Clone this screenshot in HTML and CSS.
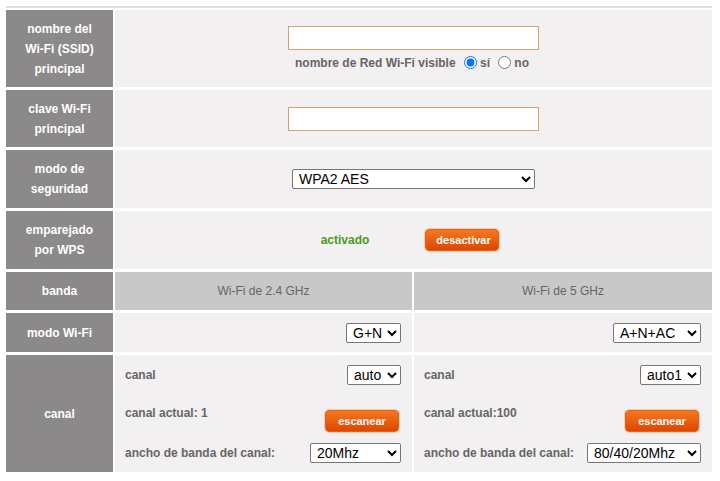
FILE: index.html
```html
<!DOCTYPE html>
<html lang="es">
<head>
    <meta charset="UTF-8">
    <meta name="viewport" content="width=device-width, initial-scale=1.0">
    <title>Configuración Wi-Fi</title>
    <link rel="stylesheet" href="styles.css">
</head>
<body>
    <div class="panel">
        <div class="settings">
            <div class="label">nombre del<br>Wi-Fi (SSID)<br>principal</div>
            <div class="field wide ssid">
                <input type="text" class="text-input">
                <div class="hint">nombre de Red Wi-Fi visible <input type="radio" name="visible" checked>sí <input type="radio" name="visible">no</div>
            </div>

            <div class="label">clave Wi-Fi<br>principal</div>
            <div class="field wide">
                <input type="password" class="text-input">
            </div>

            <div class="label">modo de<br>seguridad</div>
            <div class="field wide">
                <select class="security">
                    <option>WPA2 AES</option>
                </select>
            </div>

            <div class="label">emparejado<br>por WPS</div>
            <div class="field wide wps">
                <span class="status">activado</span>
                <button class="btn">desactivar</button>
            </div>

            <div class="label">banda</div>
            <div class="band">Wi-Fi de 2.4 GHz</div>
            <div class="band">Wi-Fi de 5 GHz</div>

            <div class="label">modo Wi-Fi</div>
            <div class="field right">
                <select class="sel-gn">
                    <option>G+N</option>
                </select>
            </div>
            <div class="field right">
                <select class="sel-ac">
                    <option>A+N+AC</option>
                </select>
            </div>

            <div class="label">canal</div>
            <div class="field channel">
                <div class="ch-row">
                    <span class="sub">canal</span>
                    <select class="sel-auto">
                        <option>auto</option>
                    </select>
                </div>
                <div class="ch-row scan-row">
                    <span class="sub">canal actual: 1</span>
                    <button class="btn scan">escanear</button>
                </div>
                <div class="ch-row">
                    <span class="sub">ancho de banda del canal:</span>
                    <select class="sel-bw">
                        <option>20Mhz</option>
                    </select>
                </div>
            </div>
            <div class="field channel">
                <div class="ch-row">
                    <span class="sub">canal</span>
                    <select class="sel-auto1">
                        <option>auto1</option>
                    </select>
                </div>
                <div class="ch-row scan-row">
                    <span class="sub">canal actual:100</span>
                    <button class="btn scan">escanear</button>
                </div>
                <div class="ch-row">
                    <span class="sub">ancho de banda del canal:</span>
                    <select class="sel-bw5">
                        <option>80/40/20Mhz</option>
                    </select>
                </div>
            </div>
        </div>
    </div>
</body>
</html>
```

FILE: styles.css
```css
body {
    margin: 0;
    padding: 0;
    background-color: #fff;
    font-family: "Liberation Sans", Arial, sans-serif;
}
.panel {
    margin: 6px 0 0 6px;
    width: 706px;
    border-top: 2px solid #e0dfdf;
    padding-top: 2px;
}
.settings {
    display: grid;
    grid-template-columns: 107px 297px 298px;
    grid-template-rows: 77px 57px 58px 58px 38px 39px 117px;
    column-gap: 2px;
    row-gap: 3px;
}
.label {
    background-color: #8b8989;
    color: #fff;
    font-weight: bold;
    font-size: 12px;
    line-height: 20px;
    text-align: center;
    display: flex;
    align-items: center;
    justify-content: center;
}
.field {
    background-color: #f2f0f0;
    display: flex;
    align-items: center;
}
.wide {
    grid-column: 2 / 4;
    justify-content: center;
}
.ssid {
    flex-direction: column;
    gap: 5px;
}
.text-input {
    width: 251px;
    height: 24px;
    box-sizing: border-box;
    border: 1px solid #d8a26f;
    background: #fff;
    margin: 0;
    padding: 0 4px;
    outline: none;
}
.hint {
    font-size: 12px;
    font-weight: bold;
    color: #666;
    line-height: 16px;
    margin-left: -3px;
}
.hint input {
    width: 13px;
    height: 13px;
    margin: 0 3px 0 5px;
    vertical-align: -2px;
}
select {
    height: 20px;
    box-sizing: border-box;
    font-family: "Liberation Sans", Arial, sans-serif;
    font-size: 14px;
    color: #000;
    background-color: #fff;
    border: 1px solid #767676;
    border-radius: 2px;
    padding: 0 0 0 2px;
    margin: 0;
}
.security { width: 243px; }
.sel-gn { width: 55px; }
.sel-ac { width: 88px; }
.sel-auto { width: 54px; }
.sel-auto1 { width: 61px; }
.sel-bw { width: 91px; }
.sel-bw5 { width: 114px; }
.wps {
    gap: 56px;
    padding-right: 7px;
}
.status {
    color: #4a9a1c;
    font-weight: bold;
    font-size: 12px;
}
.btn {
    height: 22px;
    padding: 0 10px;
    border: 1px solid #e2631a;
    border-radius: 4px;
    background: linear-gradient(#f7771e, #dc4700);
    box-shadow: 0 0 0 1px #f5cdb6;
    color: #fff;
    font-family: "Liberation Sans", Arial, sans-serif;
    font-weight: bold;
    font-size: 11px;
    cursor: pointer;
}
.wps .btn {
    width: 74px;
}
.band {
    background-color: #c9c8c8;
    color: #666;
    font-size: 12px;
    display: flex;
    align-items: center;
    justify-content: center;
}
.right {
    justify-content: flex-end;
    padding-right: 11px;
}
.channel {
    flex-direction: column;
    align-items: stretch;
    padding: 10px 11px 9px 10px;
}
.ch-row {
    display: flex;
    justify-content: space-between;
    align-items: center;
    height: 20px;
}
.scan-row {
    height: 32px;
    margin: 20px 0 6px;
}
.sub {
    font-size: 12px;
    font-weight: bold;
    color: #666;
    line-height: 16px;
}
.scan-row .sub {
    align-self: flex-start;
}
.scan {
    width: 74px;
    margin-right: 2px;
}
```
